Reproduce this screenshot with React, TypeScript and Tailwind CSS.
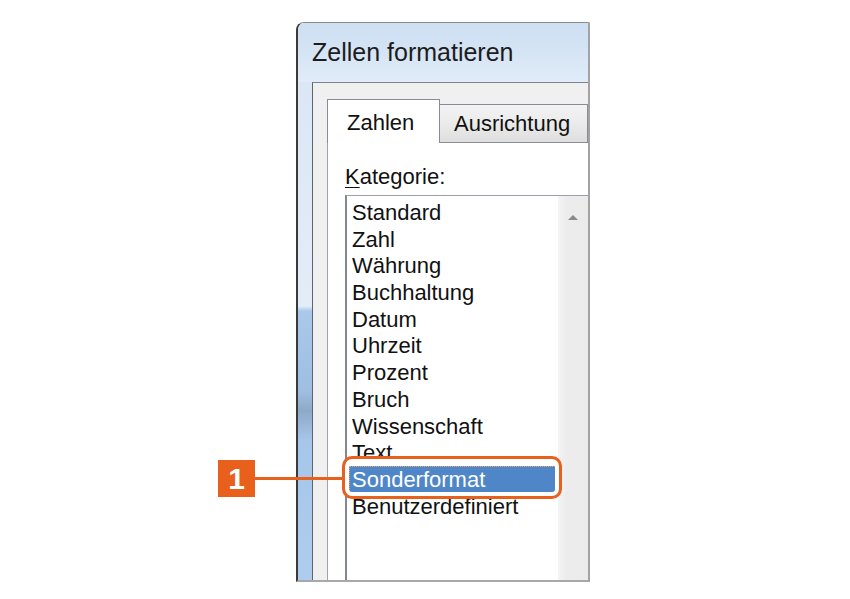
const items = [
  "Standard",
  "Zahl",
  "Währung",
  "Buchhaltung",
  "Datum",
  "Uhrzeit",
  "Prozent",
  "Bruch",
  "Wissenschaft",
  "Text",
  "Sonderformat",
  "Benutzerdefiniert",
];

export default function App() {
  return (
    <div
      className="relative w-[850px] h-[599px] overflow-hidden bg-white text-[22px] text-[#111]"
      style={{ fontFamily: '"Liberation Sans", Arial, sans-serif' }}
    >
      {/* dialog window */}
      <div className="ml-[296px] mt-[22px] w-[294px] h-[560px] flex flex-col overflow-hidden rounded-tl-[8px] border-l-2 border-l-[#3a3a3a] border-t border-t-[#8a8a8a] border-r-2 border-r-[#a3a3a3] border-b-2 border-b-[#a8a8a8]">
        <div className="h-[59px] shrink-0 flex items-center pl-[14px] bg-[linear-gradient(180deg,#cddff2_0%,#d6e5f5_55%,#e1ecf8_100%)]">
          <span className="text-[25px] text-[#1c1c1c]">Zellen formatieren</span>
        </div>

        <div className="flex-1 flex min-h-0">
          <div className="w-[14px] shrink-0 bg-[linear-gradient(180deg,#dbe7f5_0%,#e3edf8_45%,#a9c8ea_46%,#9fbfe2_62%,#8ea9c8_66%,#a6c6ea_72%,#aecdee_100%)]" />

          <div className="flex-1 flex flex-col min-w-0 bg-[#f0f0f0] border-l border-l-[#5e6470] border-t border-t-[#7d8390] pl-[14px] pt-[16px]">
            {/* tabs */}
            <div className="flex h-[43px] shrink-0">
              <div className="relative z-10 w-[113px] h-[44px] shrink-0 bg-white border border-b-0 border-[#898c95] pl-[19px] pt-[10px] leading-[26px]">
                Zahlen
              </div>
              <div className="flex-1 mt-[5px] border-t border-r border-[#898c95] bg-[linear-gradient(180deg,#f3f3f3_0%,#ebebeb_50%,#dedede_100%)] pl-[14px] pt-[6px] leading-[26px] whitespace-nowrap">
                Ausrichtung
              </div>
            </div>

            {/* tab page */}
            <div className="flex-1 flex flex-col min-h-0 bg-white border-l border-l-[#a0a3ab] border-t border-t-[#898c95] pl-[17px]">
              <div className="pt-[21px] leading-[26px] h-[46px]">
                <span className="underline underline-offset-[3px] decoration-1">K</span>ategorie:
              </div>
              <div className="flex-1 flex min-h-0 mt-[6px] border-l-2 border-l-[#828790] border-t border-t-[#9aa0aa]">
                <div className="flex-1 pt-[3px]">
                  {items.map((item) =>
                    item === "Sonderformat" ? (
                      <div
                        key={item}
                        className="ml-[2px] mr-px h-[26.7px] leading-[25px] bg-[#4f86c8] text-white border border-dotted border-[#f2a26a] pl-[2px]"
                      >
                        {item}
                      </div>
                    ) : (
                      <div key={item} className="h-[26.7px] leading-[28px] pl-[5px] whitespace-nowrap">
                        {item}
                      </div>
                    )
                  )}
                </div>
                <div className="w-[30px] shrink-0 flex justify-center pt-[18px] bg-[linear-gradient(90deg,#f4f4f4_0%,#ececec_30%,#ebebeb_100%)]">
                  <svg width="12" height="6" viewBox="0 0 12 6">
                    <path d="M1 6 L6 1 L11 6 Z" fill="#8a8a8a" />
                  </svg>
                </div>
              </div>
            </div>
          </div>
        </div>
      </div>

      {/* annotation */}
      <div className="absolute left-[342px] top-[456px] w-[220px] h-[43px] rounded-[10px] border-[3px] border-[#e8601c] shadow-[inset_0_0_0_4px_#ffffff]" />
      <div className="absolute left-[255px] top-[477px] w-[88px] h-[3px] bg-[#e8601c]" />
      <div className="absolute left-[218px] top-[460px] w-[37px] h-[37px] bg-[#e8601c] flex items-center justify-center text-white font-bold text-[30px] leading-none">
        1
      </div>
    </div>
  );
}
